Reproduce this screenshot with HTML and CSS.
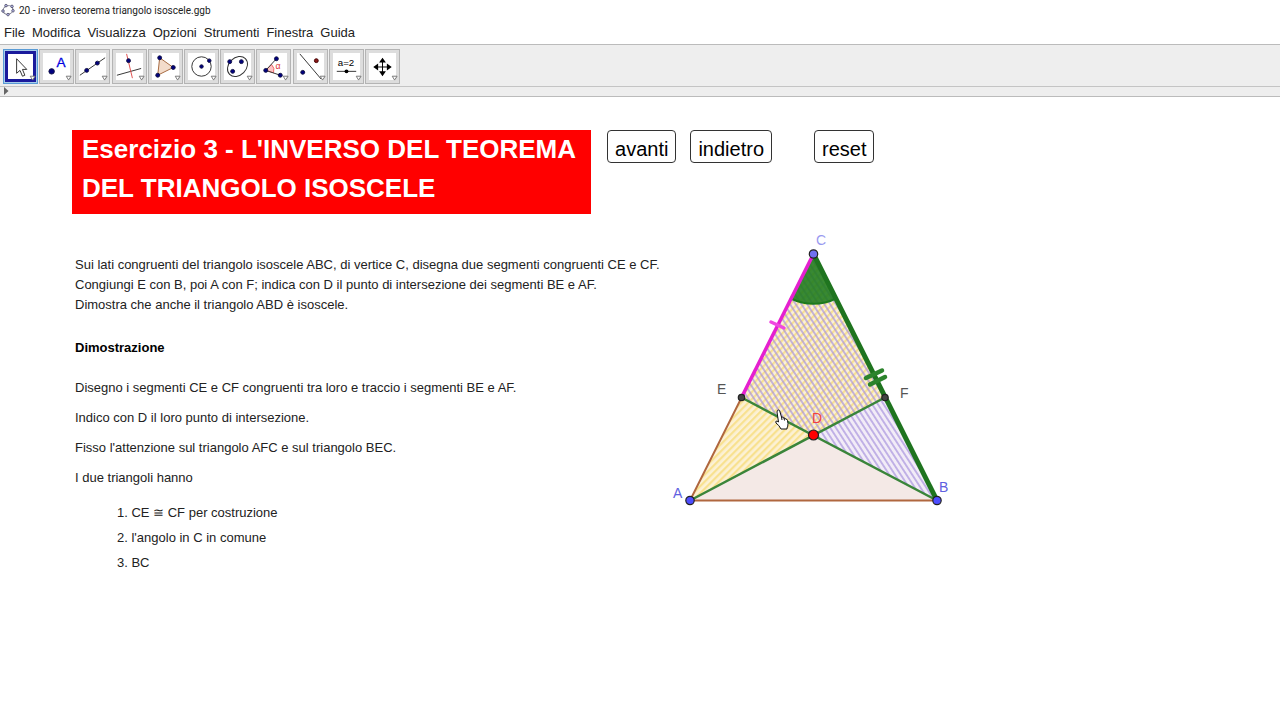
FILE: index.html
```
<!DOCTYPE html>
<html lang="it">
<head>
  <meta charset="UTF-8">
  <meta name="viewport" content="width=device-width, initial-scale=1.0">
  <title>20 - inverso teorema triangolo isoscele.ggb</title>
  <link rel="stylesheet" href="styles.css">
</head>
<body>
  <!-- Barra del titolo -->
  <header class="titlebar">
    <svg class="app-icon" viewBox="0 0 14 14" aria-hidden="true">
      <ellipse cx="7" cy="7" rx="5" ry="4.2" fill="none" stroke="#77778c" transform="rotate(-20 7 7)"/>
      <g fill="#b4b4e6" stroke="#44445a" stroke-width=".7">
        <circle cx="5" cy="2.6" r="1.3"/><circle cx="11" cy="3.4" r="1.3"/><circle cx="12" cy="7.8" r="1.3"/><circle cx="7" cy="11.6" r="1.3"/><circle cx="2" cy="8" r="1.3"/>
      </g>
    </svg>
    <span>20 - inverso teorema triangolo isoscele.ggb</span>
  </header>

  <nav class="menubar">
    <a href="#">File</a>
    <a href="#">Modifica</a>
    <a href="#">Visualizza</a>
    <a href="#">Opzioni</a>
    <a href="#">Strumenti</a>
    <a href="#">Finestra</a>
    <a href="#">Guida</a>
  </nav>

  <!-- Strumenti -->
  <div class="toolbar">
    <div class="tools">
      <button class="tool selected" aria-label="Muovi">
        <svg viewBox="0 0 34 34"><path d="M13 9V24L16.500 21L19 27L21.500 26L19 20H23.500Z" fill="#fff" stroke="#333"/><path class="more" d="M27 27h5l-2.500 4z"/></svg>
      </button>
      <button class="tool" aria-label="Punto">
        <svg viewBox="0 0 34 34"><circle class="pt" cx="12" cy="22" r="2.800"/><text class="blue-a" x="17" y="18">A</text><path class="more" d="M27 27h5l-2.500 4z"/></svg>
      </button>
      <button class="tool" aria-label="Retta">
        <svg viewBox="0 0 34 34"><path class="ln" d="M4 26L30 8"/><circle class="pt" cx="11" cy="21" r="2"/><circle class="pt" cx="22" cy="13.500" r="2"/><path class="more" d="M27 27h5l-2.500 4z"/></svg>
      </button>
      <button class="tool" aria-label="Retta perpendicolare">
        <svg viewBox="0 0 34 34"><path class="ln" d="M4 26L29 19"/><path class="ln red" d="M14 4L20 29"/><circle class="pt" cx="16" cy="11" r="2"/><path class="more" d="M27 27h5l-2.500 4z"/></svg>
      </button>
      <button class="tool" aria-label="Poligono">
        <svg viewBox="0 0 34 34"><path d="M11 8L25 18L9 26Z" fill="#f3dccb" stroke="#a5683f"/><circle class="pt" cx="11" cy="8" r="2"/><circle class="pt" cx="25" cy="18" r="2"/><circle class="pt" cx="9" cy="26" r="2"/><path class="more" d="M27 27h5l-2.500 4z"/></svg>
      </button>
      <button class="tool" aria-label="Circonferenza">
        <svg viewBox="0 0 34 34"><circle class="ln" cx="17" cy="17" r="10"/><circle class="pt" cx="17" cy="17" r="1.800"/><circle class="pt" cx="25" cy="11" r="1.800"/><path class="more" d="M27 27h5l-2.500 4z"/></svg>
      </button>
      <button class="tool" aria-label="Conica">
        <svg viewBox="0 0 34 34"><ellipse class="ln" cx="17" cy="17" rx="11.500" ry="9" transform="rotate(-45 17 17)"/><circle class="pt" cx="9" cy="12" r="2"/><circle class="pt" cx="21" cy="12" r="2"/><circle class="pt" cx="12" cy="22" r="2"/><path class="more" d="M27 27h5l-2.500 4z"/></svg>
      </button>
      <button class="tool" aria-label="Angolo">
        <svg viewBox="0 0 34 34"><path d="M9 21L15 15A8 8 0 0 1 17 23.500Z" fill="#ffc4c4" stroke="#e66"/><path class="ln" d="M20 9L9 21L24 26"/><circle class="pt" cx="20" cy="9" r="2"/><circle class="pt" cx="9" cy="21" r="2"/><circle class="pt" cx="24" cy="26" r="2"/><text class="alpha" x="19" y="20">α</text><path class="more" d="M27 27h5l-2.500 4z"/></svg>
      </button>
      <button class="tool" aria-label="Simmetria assiale">
        <svg viewBox="0 0 34 34"><path class="ln" d="M6 4L28 30"/><circle class="pt" cx="9" cy="23" r="2"/><circle cx="23" cy="11" r="2" fill="#8b1a1a" stroke="#400"/><path class="more" d="M27 27h5l-2.500 4z"/></svg>
      </button>
      <button class="tool" aria-label="Slider">
        <svg viewBox="0 0 34 34"><text class="val" x="8" y="16">a=2</text><path class="ln" d="M7 22H27"/><circle cx="17" cy="22" r="2"/><path class="more" d="M27 27h5l-2.500 4z"/></svg>
      </button>
      <button class="tool" aria-label="Muovi vista">
        <svg viewBox="0 0 34 34"><path d="M17 9V26M9 17.500H25" stroke="#000"/><path d="M17 8l3.500 5h-7zM17 27l3.500-5h-7zM7.500 17.500l5-3.500v7zM26.500 17.500l-5-3.500v7z"/><path class="more" d="M27 27h5l-2.500 4z"/></svg>
      </button>
    </div>
  </div>
  <div class="stylebar">
    <svg viewBox="0 0 5 8" aria-hidden="true"><path d="M0 0L4.500 4L0 8Z" fill="#666"/></svg>
  </div>

  <!-- Vista grafica -->
  <main class="canvas">
    <div class="top">
      <h1>Esercizio 3 - L'INVERSO DEL TEOREMA<br>DEL TRIANGOLO ISOSCELE</h1>
      <div class="steps">
        <button class="step">avanti</button>
        <button class="step">indietro</button>
        <button class="step reset">reset</button>
      </div>
    </div>

    <div class="content">
      <div class="proof">
        <p>Sui lati congruenti del triangolo isoscele ABC, di vertice C, disegna due segmenti congruenti CE e CF.<br>
          Congiungi E con B, poi A con F; indica con D il punto di intersezione dei segmenti BE e AF.<br>
          Dimostra che anche il triangolo ABD è isoscele.</p>
        <h2>Dimostrazione</h2>
        <p>Disegno i segmenti CE e CF congruenti tra loro e traccio i segmenti BE e AF.</p>
        <p>Indico con D il loro punto di intersezione.</p>
        <p>Fisso l'attenzione sul triangolo AFC e sul triangolo BEC.</p>
        <p>I due triangoli hanno</p>
        <ul>
          <li>1. CE ≅ CF per costruzione</li>
          <li>2. l'angolo in C in comune</li>
          <li>3. BC</li>
        </ul>
      </div>

      <svg class="figure" viewBox="0 0 280 285" role="img" aria-label="Triangolo isoscele ABC">
        <defs>
          <pattern id="yellow" width="5" height="5" patternUnits="userSpaceOnUse" patternTransform="rotate(45)">
            <rect width="2.200" height="5" fill="#f7dc78" opacity=".75"/>
          </pattern>
          <pattern id="violet" width="4.800" height="4.800" patternUnits="userSpaceOnUse" patternTransform="rotate(-33)">
            <rect width="1.900" height="4.800" fill="#a48fdc" opacity=".65"/>
          </pattern>
        </defs>
        <path d="M141.500 24L18 270.500H265Z" fill="#f4e9e6"/>
        <path d="M265 270.500L69.500 167.500L141.500 24Z" fill="#f1edfd" opacity=".7"/>
        <path d="M18 270.500L213 167.500L141.500 24Z" fill="#fff3cc" opacity=".7"/>
        <path d="M18 270.500L213 167.500L141.500 24Z" fill="url(#yellow)"/>
        <path d="M265 270.500L69.500 167.500L141.500 24Z" fill="url(#violet)"/>
        <path d="M141.500 24L119 68.500A50 50 0 0 0 164 68.500Z" fill="#1d7a1d" fill-opacity=".88" stroke="#1d7a1d" stroke-width="2"/>
        <path d="M141.500 24L18 270.500H265" fill="none" stroke="#b0673f" stroke-width="2"/>
        <path d="M18 270.500L213 167.500M265 270.500L69.500 167.500" stroke="#3a853a" stroke-width="2.500"/>
        <path d="M141.500 24L265 270.500" stroke="#1f741f" stroke-width="5"/>
        <path d="M141.500 24L69.500 167.500" stroke="#e51fd0" stroke-width="3.500"/>
        <path d="M99 92L112 98" stroke="#f048e0" stroke-width="3.500" stroke-linecap="round"/>
        <path d="M194 148L210 140.500M198 154.500L213 147" stroke="#2c842c" stroke-width="4.500" stroke-linecap="round"/>
        <g stroke="#222" stroke-width="1.200">
          <circle cx="141.500" cy="24" r="4.200" fill="#7070f0"/>
          <circle cx="18" cy="270.500" r="4.200" fill="#4d4dff"/>
          <circle cx="265" cy="270.500" r="4.200" fill="#4d4dff"/>
          <circle cx="69.500" cy="167.500" r="3.200" fill="#444"/>
          <circle cx="213" cy="167.500" r="3.200" fill="#444"/>
          <circle cx="141.500" cy="205" r="5" fill="#f00"/>
        </g>
        <g class="labels">
          <text class="c" x="144" y="15">C</text>
          <text class="k" x="45" y="164">E</text>
          <text class="k" x="228" y="168">F</text>
          <text class="d" x="140" y="193">D</text>
          <text class="b" x="1" y="268">A</text>
          <text class="b" x="267" y="262">B</text>
        </g>
        <!-- puntatore a mano -->
        <path d="M105 182q0-2 1.500-2t1.500 2l1.500 5q1.500-.5 2 1q1.500-.5 2 1q2 0 2 1.500l.5 3q0 3-1 4.500v1h-6q-2-4-5-6q-1-2 1-2l1.500 1Z" fill="#fff" stroke="#111"/>
        <path d="M109.500 187l.5 3M112 188l.5 2.500" stroke="#111"/>
      </svg>
    </div>
  </main>
</body>
</html>
```

FILE: styles.css
```
* {
  box-sizing: border-box;
}

body {
  margin: 0;
  background-color: #fff;
  color: #222;
  font-family: "Liberation Sans", Arial, sans-serif;
  font-size: 13px;
}

/* Barra del titolo */
.titlebar {
  display: flex;
  align-items: center;
  gap: 4px;
  height: 20px;
  padding-left: 1px;
  font-family: Roboto, "Open Sans", sans-serif;
  font-size: 10px;
}
.app-icon {
  width: 14px;
  height: 14px;
}

/* Menu */
.menubar {
  display: flex;
  gap: 7px;
  padding: 1px 4px 0;
  line-height: 23px;
}
.menubar a {
  color: #222;
  text-decoration: none;
}

/* Barra degli strumenti */
.toolbar {
  padding: 4px 3px 2px;
  background-color: #eee;
  border-top: 1px solid #bbb;
  border-bottom: 1px solid #c4c4c4;
}
.tools {
  display: flex;
  justify-content: space-between;
  width: 397px;
}
.tool {
  width: 35px;
  height: 35px;
  padding: 0;
  border: 1px solid #b4b4b4;
  background-color: #fff;
  box-shadow: inset 0 0 0 3px #ddd;
}
.tool.selected {
  border-color: #5a9bd5;
  box-shadow: inset 0 0 0 1px #a8cdea, inset 0 0 0 4px #1a1a9c;
}
.tool svg {
  display: block;
  width: 33px;
  height: 33px;
}
.pt {
  fill: #000080;
  stroke: #111144;
}
.ln {
  fill: none;
  stroke: #333;
}
.ln.red {
  stroke: #e05050;
}
.more {
  fill: #fff;
  stroke: #777;
}
.blue-a {
  fill: #0000e0;
  stroke: #0000e0;
  stroke-width: .3px;
  font-size: 14px;
}
.alpha {
  fill: #d33;
  font-size: 9px;
}
.val {
  font-size: 10px;
}
.stylebar {
  height: 10px;
  padding: 0 4px;
  background-color: #eee;
  border-bottom: 1px solid #bbb;
}
.stylebar svg {
  display: block;
  width: 5px;
  height: 8px;
}

/* Vista grafica */
.canvas {
  padding: 33px 0 33px 72px;
}
.top {
  display: flex;
  align-items: flex-start;
  gap: 16px;
}
h1 {
  margin: 0;
  padding: 0 15px 6px 10px;
  background-color: #f00;
  color: #fff;
  font-size: 26px;
  line-height: 39px;
  white-space: nowrap;
}
.steps {
  display: flex;
  gap: 14px;
}
.step {
  height: 33px;
  padding: 6px 7px 0;
  border: 1px solid #333;
  border-radius: 4px;
  background-color: #fff;
  color: #000;
  font-family: inherit;
  font-size: 20px;
}
.step.reset {
  margin-left: 28px;
}

.content {
  display: flex;
  align-items: flex-start;
  margin-top: 16px;
}
.proof {
  width: 600px;
  padding: 25px 0 0 3px;
  line-height: 20px;
  white-space: nowrap;
}
.proof p {
  margin: 0 0 10px;
}
.proof h2 {
  margin: 23px 0 20px;
  color: #000;
  font-size: 13px;
  line-height: 20px;
}
.proof ul {
  margin: 15px 0 0;
  padding-left: 42px;
  list-style: none;
}
.proof li {
  margin-bottom: 5px;
}

/* Figura */
.figure {
  flex: none;
  width: 280px;
  height: 285px;
}
.labels {
  font-size: 14px;
}
.labels .c {
  fill: #9a9af0;
}
.labels .k {
  fill: #555;
}
.labels .d {
  fill: #f04040;
}
.labels .b {
  fill: #6060e0;
}
```
